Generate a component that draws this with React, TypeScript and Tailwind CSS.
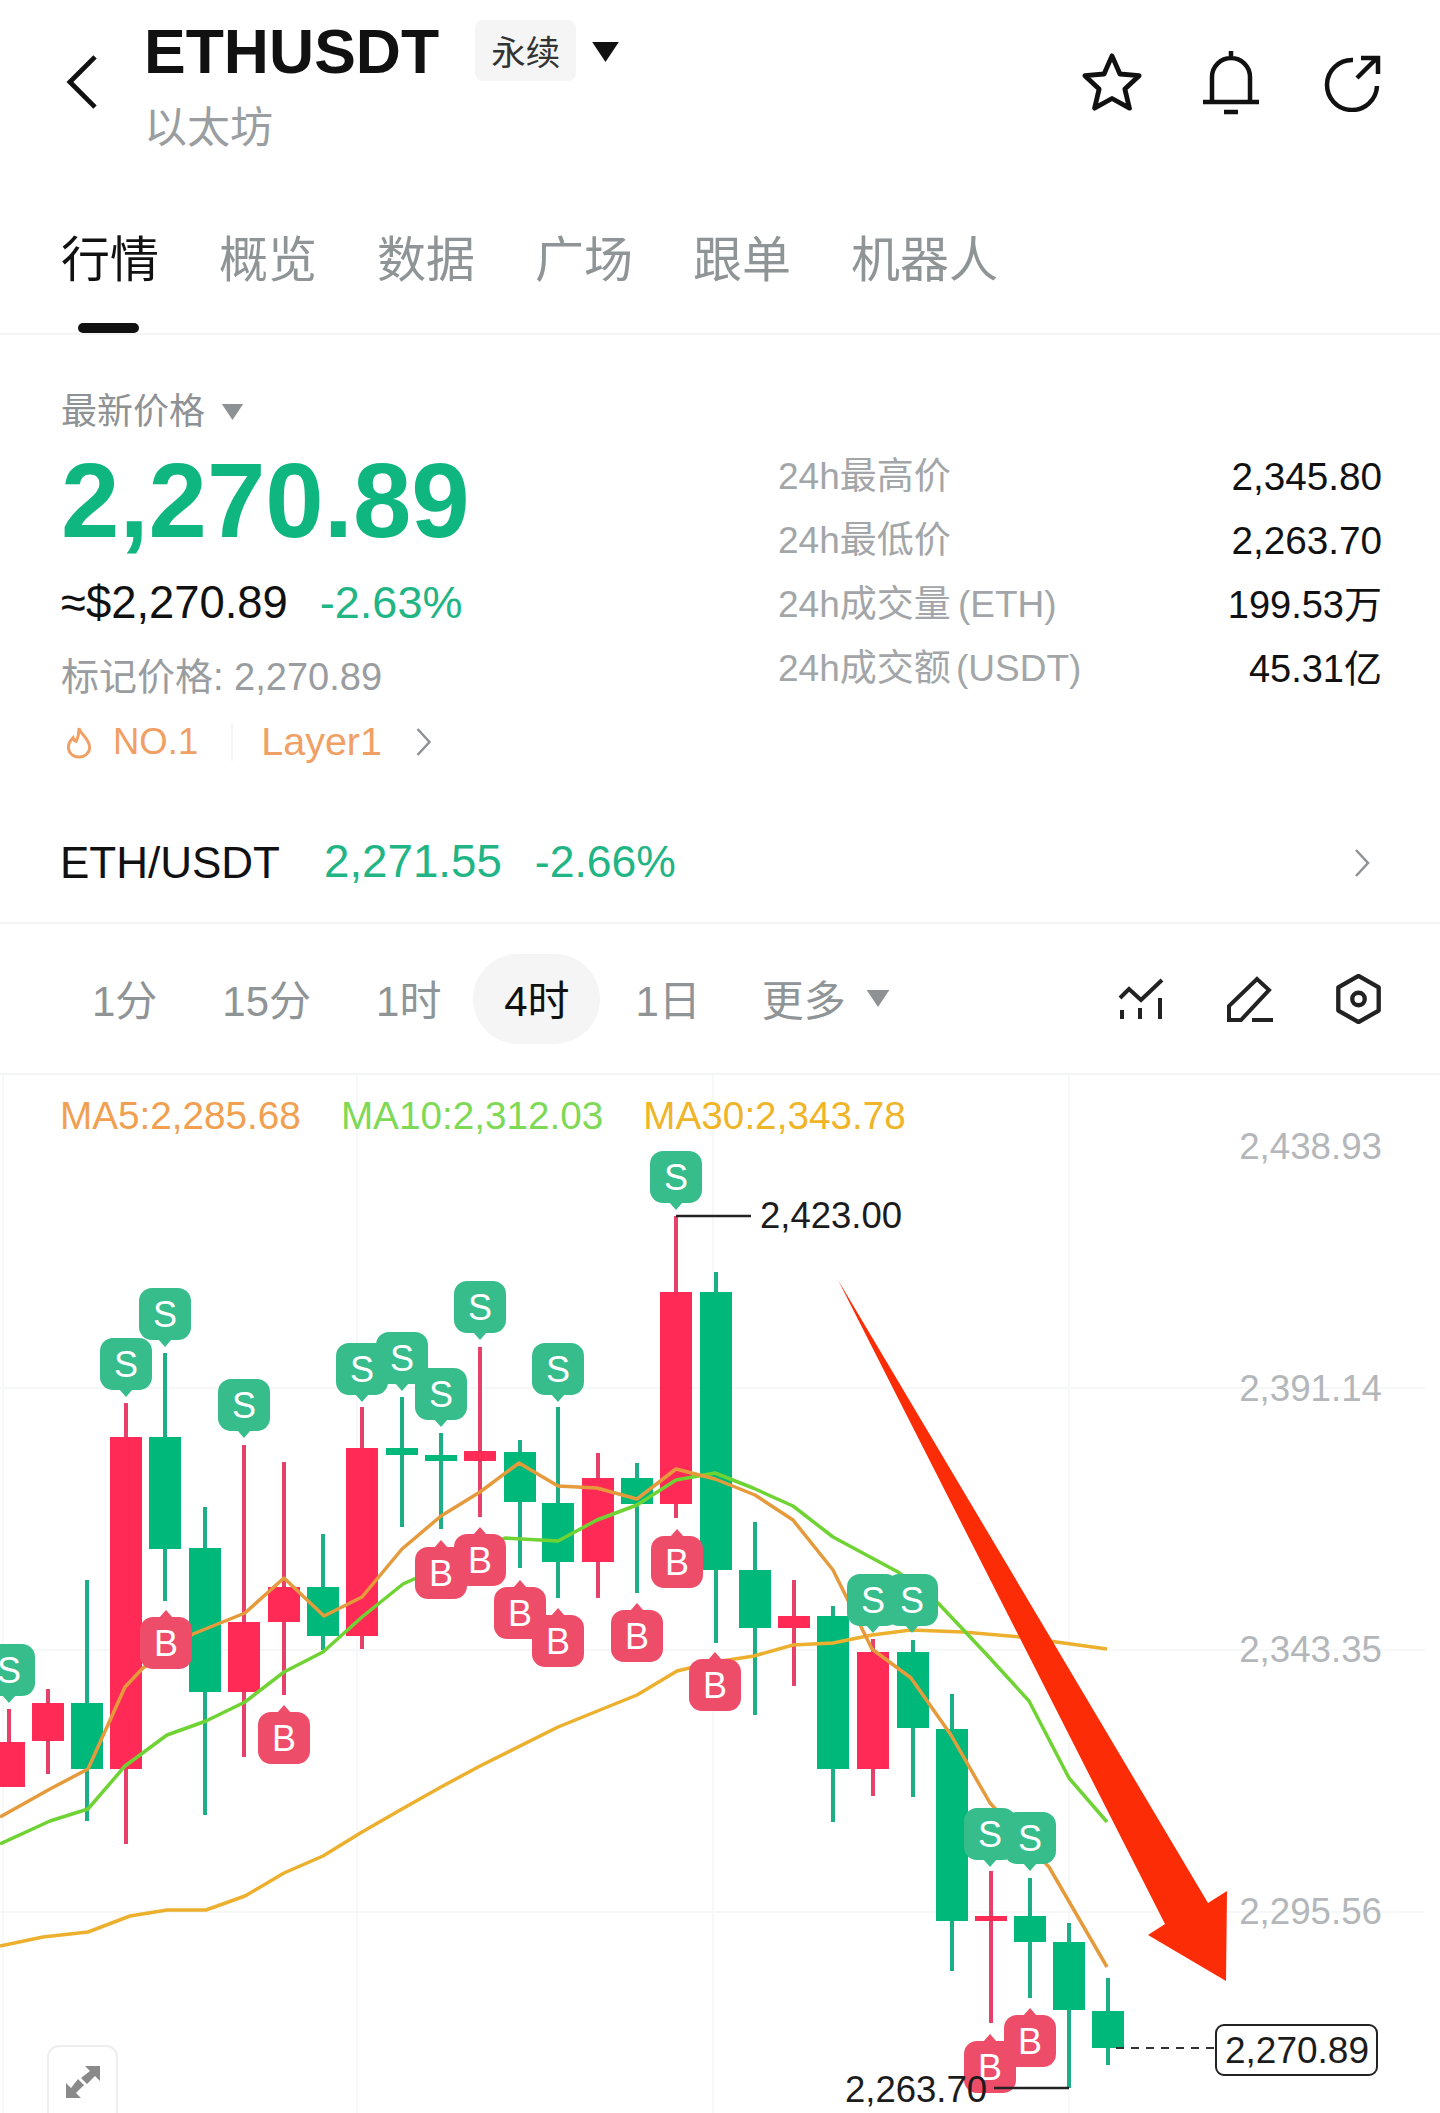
const UP = "#00b87a";
const DOWN = "#ff2a55";

// candle data in page pixels: x, wick top, body top, body bottom, wick bottom, falling?
const candles: [number, number, number, number, number, boolean][] = [
  [9, 1709, 1742, 1787, 1787, false],
  [48, 1689, 1703, 1741, 1774, false],
  [87, 1580, 1703, 1769, 1821, true],
  [126, 1403, 1437, 1769, 1844, false],
  [165, 1353, 1437, 1549, 1601, true],
  [205, 1507, 1548, 1692, 1815, true],
  [244, 1445, 1622, 1692, 1757, false],
  [284, 1462, 1587, 1622, 1695, false],
  [323, 1534, 1587, 1636, 1650, true],
  [362, 1407, 1448, 1636, 1649, false],
  [402, 1397, 1448, 1455, 1527, true],
  [441, 1433, 1455, 1461, 1529, true],
  [480, 1347, 1451, 1461, 1517, false],
  [520, 1440, 1452, 1502, 1568, true],
  [558, 1407, 1503, 1562, 1598, true],
  [598, 1453, 1478, 1562, 1598, false],
  [637, 1463, 1478, 1504, 1593, true],
  [676, 1216, 1292, 1504, 1518, false],
  [716, 1272, 1292, 1570, 1643, true],
  [755, 1522, 1570, 1628, 1715, true],
  [794, 1580, 1616, 1628, 1686, false],
  [833, 1606, 1616, 1769, 1822, true],
  [873, 1639, 1652, 1769, 1796, false],
  [913, 1640, 1652, 1728, 1797, true],
  [952, 1694, 1729, 1921, 1971, true],
  [991, 1871, 1916, 1921, 2023, false],
  [1030, 1878, 1916, 1942, 1998, true],
  [1069, 1923, 1942, 2010, 2088, true],
  [1108, 1978, 2011, 2048, 2065, true],
];

const ma5 =
  "0,1817 50,1789 88,1769 125,1687 143,1668 193,1634 245,1613 284,1578 324,1616 362,1597 402,1549 441,1516 480,1492 519,1463 558,1486 597,1488 637,1499 676,1469 715,1479 755,1495 793,1520 833,1570 872,1649 911,1678 951,1735 990,1803 1049,1867 1107,1967";
const ma10 =
  "0,1844 50,1821 88,1809 125,1766 167,1735 206,1721 245,1702 284,1672 323,1652 362,1617 403,1584 505,1538 558,1541 597,1520 637,1505 676,1480 715,1473 753,1488 793,1506 833,1537 898,1572 939,1604 988,1656 1029,1701 1069,1778 1107,1822";
const ma30 =
  "0,1946 43,1937 88,1932 130,1916 167,1910 206,1910 245,1896 284,1873 323,1856 362,1832 402,1809 441,1787 480,1766 558,1727 637,1695 677,1671 715,1662 754,1656 793,1645 833,1643 872,1635 911,1630 963,1632 1020,1637 1107,1649";

const sells = [
  [9, 1670], [165, 1314], [126, 1364], [362, 1369], [402, 1358], [441, 1394], [244, 1405], [480, 1307],
  [558, 1369], [676, 1177], [873, 1600], [912, 1600], [990, 1834], [1030, 1838],
];
const buys = [
  [166, 1643], [284, 1738], [480, 1560], [441, 1573], [520, 1613], [558, 1641], [637, 1636], [677, 1562],
  [715, 1685], [990, 2067], [1030, 2041],
];

const axis = [
  ["2,438.93", 1146],
  ["2,391.14", 1388],
  ["2,343.35", 1649],
  ["2,295.56", 1911],
];

function Caret({ className }: { className: string }) {
  return (
    <svg viewBox="0 0 24 18" className={className} fill="currentColor">
      <polygon points="0,0 24,0 12,18" />
    </svg>
  );
}

function Chevron({ className }: { className: string }) {
  return (
    <svg viewBox="0 0 16 30" className={className} fill="none" stroke="currentColor" strokeWidth="2.5">
      <path d="M2 2 L14 15 L2 28" />
    </svg>
  );
}

function Marker({ x, y, label }: { x: number; y: number; label: "S" | "B" }) {
  const sell = label === "S";
  const fill = sell ? "#36bd8b" : "#ee4d6a";
  return (
    <g>
      <rect x={x - 26} y={y - 26} width="52" height="52" rx="13" fill={fill} />
      {sell ? (
        <polygon points={`${x - 7},${y + 25} ${x + 7},${y + 25} ${x},${y + 33}`} fill={fill} />
      ) : (
        <polygon points={`${x - 7},${y - 25} ${x + 7},${y - 25} ${x},${y - 33}`} fill={fill} />
      )}
      <text x={x} y={y + 13} textAnchor="middle" fontSize="36" fill="#ffffff">
        {label}
      </text>
    </g>
  );
}

function Chart() {
  return (
    <svg viewBox="0 1075 1440 1038" className="absolute inset-0 h-full w-full">
      {[1388, 1650, 1912].map((y) => (
        <line key={y} x1="0" x2="1425" y1={y} y2={y} stroke="#f6f7f7" strokeWidth="2" />
      ))}
      {[3, 357, 713, 1069].map((x) => (
        <line key={x} x1={x} x2={x} y1="1075" y2="2113" stroke="#f7f8f8" strokeWidth="2" />
      ))}
      {axis.map(([label, y]) => (
        <text key={label} x="1382" y={Number(y) + 13} textAnchor="end" fontSize="36.7" fill="#b4b7ba">
          {label}
        </text>
      ))}

      {candles.map(([x, wt, bt, bb, wb, falling]) => (
        <g key={x}>
          <line x1={x} x2={x} y1={wt} y2={wb} stroke={falling ? "#1dae85" : "#e6416a"} strokeWidth="4" />
          <rect x={x - 16} y={bt} width="32" height={bb - bt} fill={falling ? UP : DOWN} />
        </g>
      ))}

      <polyline points={ma30} fill="none" stroke="#ecb02e" strokeWidth="3.5" strokeLinejoin="round" />
      <polyline points={ma10} fill="none" stroke="#6fd334" strokeWidth="3.5" strokeLinejoin="round" />
      <polyline points={ma5} fill="none" stroke="#e59a3c" strokeWidth="3.5" strokeLinejoin="round" />

      {sells.map(([x, y]) => (
        <Marker key={`s${x}-${y}`} x={x} y={y} label="S" />
      ))}
      {buys.map(([x, y]) => (
        <Marker key={`b${x}-${y}`} x={x} y={y} label="B" />
      ))}

      <path d="M676 1216 H751" fill="none" stroke="#222222" strokeWidth="2.5" />
      <text x="760" y="1228" fontSize="36.5" fill="#1c1c1c">
        2,423.00
      </text>
      <path d="M994 2088 H1069" fill="none" stroke="#222222" strokeWidth="2.5" />
      <text x="845" y="2102" fontSize="36.5" fill="#1c1c1c">
        2,263.70
      </text>

      <line x1="1116" x2="1215" y1="2048" y2="2048" stroke="#333333" strokeWidth="2" strokeDasharray="8 7" />
      <rect x="1216" y="2025" width="161" height="50" rx="8" fill="#ffffff" stroke="#222222" strokeWidth="2" />
      <text x="1297" y="2063" textAnchor="middle" fontSize="37" fill="#1c1c1c">
        2,270.89
      </text>

      <polygon points="838,1280 1208,1903 1227,1891 1226,1981 1148,1935 1165,1924" fill="#fb2c06" />
    </svg>
  );
}

export default function App() {
  return (
    <div className="h-[2113px] w-[1440px] overflow-hidden bg-white font-['Liberation_Sans','Noto_Sans_CJK_SC',sans-serif] text-[#111111]">
      <header className="flex h-[168px]">
        <svg viewBox="0 0 34 58" className="ml-[65px] mt-[54px] h-[56px] w-[33px]" fill="none" stroke="#111111" strokeWidth="5">
          <path d="M31 3 L5 29 L31 55" />
        </svg>
        <div className="ml-[46px]">
          <div className="flex items-start">
            <h1 className="mt-[16px] text-[62.5px] font-bold leading-[70px]">ETHUSDT</h1>
            <span className="ml-[36px] mt-[20px] flex h-[61px] w-[101px] items-center justify-center rounded-lg bg-[#f5f5f5] pt-[6px] text-[34.5px] text-[#333333]">
              永续
            </span>
            <Caret className="ml-[16px] mt-[42px] h-[20px] w-[27px] text-[#111111]" />
          </div>
          <p className="mt-[19px] text-[43px] leading-[46px] text-[#9a9ea0]">以太坊</p>
        </div>
        <div className="ml-auto mr-[59px] mt-[50px] flex h-[66px] items-center">
          <svg viewBox="-1 0 66 64" className="h-[62px] w-[66px]" fill="none" stroke="#111111" strokeWidth="5" strokeLinejoin="round">
            <polygon points="32,4 40.2,22.7 60,24.4 45.3,38.3 50,58 32,48 14,58 18.7,38.3 4,24.4 23.8,22.7" />
          </svg>
          <svg viewBox="0 0 58 66" className="ml-[57px] h-[66px] w-[58px]" fill="none" stroke="#111111" strokeWidth="4.5">
            <path d="M29 1 V8 M10 52 V27 a19 19 0 0 1 38 0 V52 M1 52 H57" />
            <path d="M22 62 H36" />
          </svg>
          <svg viewBox="0 0 58 58" className="ml-[63px] h-[58px] w-[58px]" fill="none" stroke="#111111" strokeWidth="4.5">
            <path d="M30 6 A25 25 0 1 0 54 32" />
            <path d="M34 24 L54 4 M38 4 H55 V20" />
          </svg>
        </div>
      </header>

      <nav className="flex h-[167px] gap-[60px] border-b-2 border-[#f3f5f5] pl-[61px] text-[49px] leading-[62px] text-[#8f9496]">
        <div className="relative h-full pt-[61px] text-[#111111]">
          行情
          <span className="absolute bottom-0 left-[17px] h-[10px] w-[61px] rounded-full bg-[#111111]" />
        </div>
        <div className="pt-[61px]">概览</div>
        <div className="pt-[61px]">数据</div>
        <div className="pt-[61px]">广场</div>
        <div className="pt-[61px]">跟单</div>
        <div className="pt-[61px]">机器人</div>
      </nav>

      <section className="flex h-[466px] justify-between pl-[61px] pr-[58px]">
        <div className="pt-[53px]">
          <div className="flex h-[48px] items-center text-[36px] text-[#8f9294]">
            最新价格
            <Caret className="ml-[16px] h-[16px] w-[23px] text-[#8f9294]" />
          </div>
          <p className="mt-[13px] text-[105px] font-bold leading-[104px] text-[#0fb67f]">2,270.89</p>
          <div className="mt-[20px] flex text-[45.4px] leading-[60px]">
            <span>≈$2,270.89</span>
            <span className="ml-[32px] text-[45px] text-[#21b585]">-2.63%</span>
          </div>
          <p className="mt-[20px] text-[38px] leading-[48px] text-[#9a9da0]">标记价格: 2,270.89</p>
          <div className="mt-[17px] flex h-[48px] items-center text-[36.5px] text-[#f0a064]">
            <svg viewBox="0 0 28 34" className="ml-[4px] h-[33px] w-[28px]" fill="none" stroke="#f0a064" strokeWidth="3">
              <path d="M14 2 C15 8 25 13 25 22 A11 10 0 0 1 3 22 C3 17 6 14 8 12 C9 15 10 16 11 16 C13 12 14 7 14 2 Z" />
            </svg>
            <span className="ml-[20px]">NO.1</span>
            <span className="ml-[33px] h-[38px] w-[2px] bg-[#f5f5f5]" />
            <span className="ml-[28px] text-[39.5px]">Layer1</span>
            <Chevron className="ml-[33px] h-[30px] w-[17px] text-[#8f9294]" />
          </div>
        </div>
        <dl className="w-[604px] pt-[110px] text-[37px] leading-[64px]">
          <div className="flex justify-between">
            <dt className="text-[#a3a6a8]">24h最高价</dt>
            <dd className="text-[38.7px]">2,345.80</dd>
          </div>
          <div className="flex justify-between">
            <dt className="text-[#a3a6a8]">24h最低价</dt>
            <dd className="text-[38.7px]">2,263.70</dd>
          </div>
          <div className="flex justify-between">
            <dt className="text-[#a3a6a8] [word-spacing:-3px]">24h成交量 (ETH)</dt>
            <dd className="text-[38px]">199.53万</dd>
          </div>
          <div className="flex justify-between">
            <dt className="text-[#a3a6a8] [word-spacing:-5px]">24h成交额 (USDT)</dt>
            <dd className="text-[38px]">45.31亿</dd>
          </div>
        </dl>
      </section>

      <div className="flex h-[123px] items-center border-b-2 border-[#f3f5f5] pl-[60px] pr-[70px] pt-[2px] text-[44px]">
        <span className="text-[#111111]">ETH/USDT</span>
        <span className="ml-[44px] text-[45.7px] text-[#21b585]">2,271.55</span>
        <span className="ml-[33px] text-[44.5px] text-[#21b585]">-2.66%</span>
        <Chevron className="ml-auto h-[30px] w-[16px] text-[#8f9294]" />
      </div>

      <div className="flex h-[151px] items-center border-b-2 border-[#f3f5f5] pl-[92px] pr-[58px] text-[42px] text-[#8f9496]">
        <span className="pt-[6px]">1分</span>
        <span className="ml-[65px] pt-[6px]">15分</span>
        <span className="ml-[65px] pt-[6px]">1时</span>
        <span className="ml-[32px] flex h-[90px] w-[127px] items-center justify-center rounded-full bg-[#f5f5f5] pt-[6px] text-[#111111]">4时</span>
        <span className="ml-[35px] pt-[6px]">1日</span>
        <span className="ml-[61px] pt-[6px]">更多</span>
        <Caret className="ml-[20px] h-[17px] w-[24px] text-[#8f9294]" />
        <svg viewBox="0 0 46 42" className="ml-auto h-[42px] w-[46px]" fill="none" stroke="#222222" strokeWidth="4">
          <path d="M2 20 L11 11 L23 22 L44 2" />
          <path d="M4 32 V41 M22 30 V41 M42 20 V41" />
        </svg>
        <svg viewBox="0 0 48 46" className="ml-[62px] h-[46px] w-[48px]" fill="none" stroke="#222222" strokeWidth="4">
          <path d="M3 44 V30 L31 3 L43 14 L15 44 Z" />
          <path d="M26 44 H47" />
        </svg>
        <svg viewBox="0 0 48 52" className="ml-[61px] h-[50px] w-[47px]" fill="none" stroke="#222222" strokeWidth="4.5">
          <polygon points="24,2 45,14 45,38 24,50 3,38 3,14" strokeLinejoin="round" />
          <circle cx="24" cy="26" r="6.5" />
        </svg>
      </div>

      <div className="relative h-[1038px]">
        <Chart />
        <div className="relative flex pl-[60px] pt-[18px] text-[38.7px] leading-[46px]">
          <span className="text-[#f0a050]">MA5:2,285.68</span>
          <span className="ml-[40px] text-[#7ed957]">MA10:2,312.03</span>
          <span className="ml-[40px] text-[#f0b429]">MA30:2,343.78</span>
        </div>
        <div className="absolute left-[47px] top-[970px] flex h-[80px] w-[71px] justify-center rounded-xl border-2 border-[#eeeeee] bg-white pt-[18px]">
          <svg viewBox="0 0 36 34" className="h-[34px] w-[36px]" fill="#8a8a8a">
            <polygon points="20,1 35,1 35,16 30,11 22,19 16,13 25,6" />
            <polygon points="1,18 1,33 16,33 11,28 19,20 13,14 6,23" />
          </svg>
        </div>
      </div>
    </div>
  );
}
